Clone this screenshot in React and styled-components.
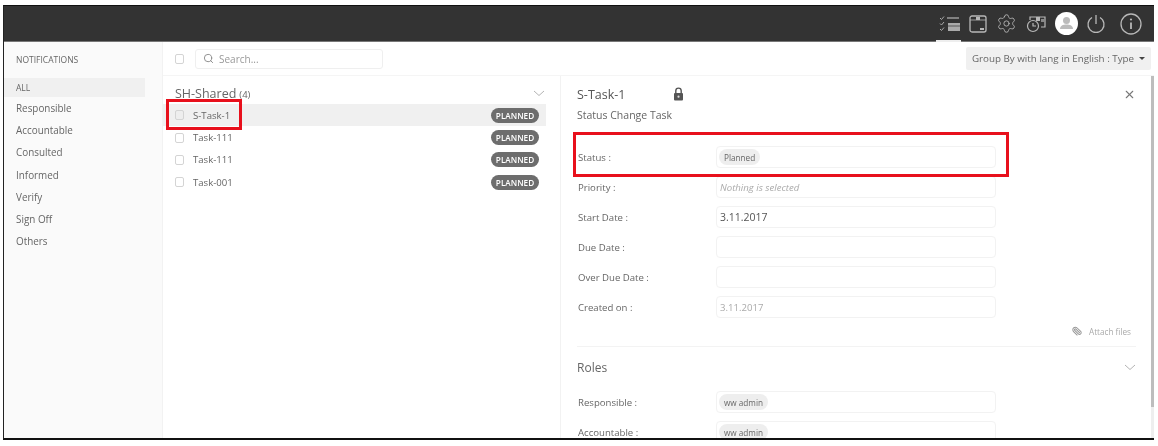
import React from "react";
import styled, { createGlobalStyle } from "styled-components";
import { Search, X, Paperclip, Settings } from "lucide-react";

const GlobalStyle = createGlobalStyle`
  html, body {
    margin: 0;
    padding: 0;
    background: #fff;
    font-family: "Open Sans", "Liberation Sans", sans-serif;
  }
  * { box-sizing: border-box; }
`;

const Frame = styled.div`
  position: relative;
  width: 1151px;
  height: 435px;
  margin: 5px 0 0 3px;
  border-top: 1px solid #111;
  border-left: 1px solid #222;
  border-bottom: 2px solid #111;
  display: flex;
  flex-direction: column;
  overflow: hidden;
  background: #fff;
  filter: blur(0.35px);
`;

const TopBar = styled.div`
  height: 36px;
  flex: none;
  background: #333;
  display: flex;
  justify-content: flex-end;
  padding-right: 3px;
  border-bottom: 1px solid #777;
`;

const NavCell = styled.div`
  position: relative;
  width: ${(p) => p.$w}px;
  display: flex;
  align-items: center;
  justify-content: center;
  color: #b8b8b8;

  ${(p) =>
    p.$active &&
    `&::after {
      content: "";
      position: absolute;
      left: 0;
      bottom: -1px;
      width: 25px;
      height: 2px;
      background: #eee;
    }`}
`;

const Main = styled.div`
  flex: 1;
  min-height: 0;
  display: flex;
`;

const Sidebar = styled.aside`
  width: 159px;
  flex: none;
  background: #fafafa;
  border-right: 1px solid #f2f2f2;
  padding-right: 17px;
`;

const SideTitle = styled.div`
  height: 36px;
  padding: 0 0 2px 12px;
  display: flex;
  align-items: center;
  font-size: 8.5px;
  color: #666;
  text-transform: uppercase;
`;

const SideItem = styled.div`
  height: ${(p) => (p.$active ? 19 : 22.2)}px;
  padding-left: 12px;
  display: flex;
  align-items: center;
  font-size: ${(p) => (p.$active ? 8.5 : 9.9)}px;
  color: #666;
  background: ${(p) => (p.$active ? "#f0f0f0" : "transparent")};
`;

const SideList = styled.div`
  display: flex;
  flex-direction: column;
`;

const Content = styled.div`
  flex: 1;
  min-width: 0;
  display: flex;
  flex-direction: column;
`;

const Toolbar = styled.div`
  height: 34px;
  flex: none;
  display: flex;
  align-items: center;
  padding: 0 3px 0 12px;
  border-bottom: 1px solid #f5f5f5;
`;

const CheckBox = styled.span`
  width: 9px;
  height: 10px;
  flex: none;
  border: 1px solid #d4d4d4;
  border-radius: 2px;
  background: ${(p) => (p.$selected ? "#eee" : "#fff")};
`;

const SearchBox = styled.div`
  width: 188px;
  height: 20px;
  margin-left: 11px;
  border: 1px solid #efefef;
  border-radius: 3px;
  padding-left: 7px;
  display: flex;
  align-items: center;
  gap: 5px;
  font-size: 10px;
  color: #999;
`;

const GroupBy = styled.div`
  margin-left: auto;
  width: 185px;
  height: 23px;
  background: #f0f0f0;
  border-radius: 2px;
  display: flex;
  align-items: center;
  justify-content: center;
  gap: 4px;
  font-size: 9.8px;
  color: #666;
`;

const Caret = styled.span`
  width: 0;
  height: 0;
  border-left: 3px solid transparent;
  border-right: 3px solid transparent;
  border-top: 3px solid #444;
  margin-left: 1px;
`;

const Split = styled.div`
  flex: 1;
  min-height: 0;
  display: flex;
`;

const ListPane = styled.section`
  width: 398px;
  flex: none;
  border-right: 1px solid #f2f2f2;
  padding-right: 14px;
`;

const GroupHead = styled.div`
  height: 28px;
  padding: 6px 1px 0 12px;
  display: flex;
  align-items: center;
  justify-content: space-between;
  color: #666;
  font-size: 12.5px;

  small {
    font-size: 9.5px;
    margin-left: 3px;
  }
`;

const TaskRow = styled.div`
  height: 22.4px;
  display: flex;
  align-items: center;
  padding: 0 7px 0 12px;
  background: ${(p) => (p.$selected ? "#f0f0f0" : "transparent")};
  font-size: 9.6px;
  color: #666;
`;

const TaskName = styled.span`
  margin-left: 9px;
`;

const Badge = styled.span`
  margin-left: auto;
  width: 48px;
  height: 15px;
  border-radius: 8px;
  background: #6d6d6d;
  color: #fff;
  font-size: 8.2px;
  font-weight: 600;
  display: flex;
  align-items: center;
  justify-content: center;
`;

const DetailPane = styled.section`
  flex: 1;
  min-width: 0;
  overflow: hidden;
  padding: 0 15px 0 16px;
  color: #666;
`;

const TitleRow = styled.div`
  height: 29px;
  padding-top: 7px;
  display: flex;
  align-items: center;
  font-size: 12.5px;
  color: #555;
`;

const TitleText = styled.span`
  width: 96px;
`;

const CloseIcon = styled.span`
  margin-left: auto;
  display: flex;
  color: #777;
`;

const SubTitle = styled.div`
  height: 19px;
  margin-bottom: 18px;
  display: flex;
  align-items: center;
  font-size: 10.5px;
  color: #666;
`;

const Field = styled.div`
  height: 30px;
  display: flex;
  align-items: center;
  padding-left: 1px;
  font-size: 9.6px;
`;

const FieldLabel = styled.label`
  width: 138px;
  flex: none;
`;

const FieldBox = styled.div`
  width: 280px;
  height: 22px;
  border: 1px solid #f2f2f2;
  border-radius: 4px;
  padding-left: ${(p) => (p.$pill ? 2 : 3)}px;
  display: flex;
  align-items: center;
  font-size: ${(p) => (p.$strong ? 10.5 : 9.6)}px;
  color: ${(p) => (p.$strong ? "#555" : "#aaa")};
  font-style: ${(p) => (p.$italic ? "italic" : "normal")};
`;

const Pill = styled.span`
  height: 16px;
  padding: 0 5px;
  border-radius: 8px;
  background: #eee;
  color: #666;
  font-size: 8.2px;
  display: flex;
  align-items: center;
`;

const AttachRow = styled.div`
  height: 18px;
  padding-right: 5px;
  display: flex;
  align-items: center;
  justify-content: flex-end;
  gap: 7px;
  font-size: 8.2px;
  color: #aaa;

  svg {
    transform: rotate(90deg);
  }
`;

const Divider = styled.div`
  height: 1px;
  background: #f3f3f3;
  margin-top: 6px;
`;

const SectionHead = styled.div`
  height: 40px;
  display: flex;
  align-items: center;
  justify-content: space-between;
  font-size: 12px;
  color: #666;
`;

const ScrollTrack = styled.div`
  width: 3px;
  flex: none;
  background: #eee;
`;

const ScrollThumb = styled.div`
  height: 331px;
  background: #bdbdbd;
`;

const Annotation = styled.div`
  position: absolute;
  left: ${(p) => p.$x}px;
  top: ${(p) => p.$y}px;
  width: ${(p) => p.$w}px;
  height: ${(p) => p.$h}px;
  border: 3px solid #e8101c;
  pointer-events: none;
`;

function Chevron() {
  return (
    <svg width="12" height="7" viewBox="0 0 12 7" fill="none" stroke="#aaa" strokeWidth="0.9">
      <path d="M1 1l5 4.500L11 1" />
    </svg>
  );
}

function LockIcon() {
  return (
    <svg width="11" height="14" viewBox="0 0 11 14" fill="none">
      <path d="M2.800 6V3.800a2.700 2.700 0 0 1 5.400 0V6" stroke="#555" strokeWidth="1.400" />
      <rect x="1" y="6" width="9" height="7.500" rx="1" fill="#555" />
      <circle cx="5.500" cy="9.700" r="1.100" fill="#ddd" />
    </svg>
  );
}

function TasksIcon() {
  return (
    <svg width="22" height="18" viewBox="0 0 22 18" fill="none" stroke="#aaa" strokeWidth="1">
      <path d="M1 3l1.500 1.500L5 1.500M1 8.500l1.500 1.500L5 7M1 14l1.500 1.500L5 12.500" />
      <path d="M8 3h12" strokeWidth="1.300" />
      <rect x="9" y="8" width="12" height="8" fill="#aaa" stroke="none" />
      <path d="M9 11h12" stroke="#333" strokeWidth="0.700" />
    </svg>
  );
}

function BoxIcon() {
  return (
    <svg width="18" height="18" viewBox="0 0 18 18" fill="none" stroke="currentColor" strokeWidth="1.300">
      <rect x="1" y="1" width="16" height="16" rx="2" />
      <path d="M1 5h16" strokeWidth="0.800" />
      <rect x="7" y="2" width="4" height="3" fill="currentColor" stroke="none" />
      <rect x="11" y="13" width="4" height="2" fill="currentColor" stroke="none" />
    </svg>
  );
}

function ClockIcon() {
  return (
    <svg width="20" height="18" viewBox="0 0 20 18" fill="none" stroke="currentColor" strokeWidth="1.200">
      <path d="M4 5V2h15v10h-4" />
      <rect x="10" y="2" width="4" height="4" fill="currentColor" stroke="none" />
      <rect x="15" y="4" width="4" height="3" fill="#888" stroke="none" />
      <circle cx="7" cy="11" r="5.500" />
      <path d="M7 8v3h3" />
    </svg>
  );
}

function AvatarIcon() {
  return (
    <svg width="23" height="23" viewBox="0 0 23 23">
      <circle cx="11.500" cy="11.500" r="11.500" fill="#fff" />
      <circle cx="11.500" cy="8.500" r="3.500" fill="#bbb" />
      <path d="M5 17c0-3.200 3-4.500 6.500-4.500S18 13.800 18 17z" fill="#bbb" />
    </svg>
  );
}

function PowerIcon() {
  return (
    <svg width="20" height="20" viewBox="0 0 20 20" fill="none" stroke="currentColor" strokeWidth="1.300">
      <path d="M6 3.500a8 8 0 1 0 8 0" />
      <path d="M10 1v9" />
    </svg>
  );
}

function InfoIcon() {
  return (
    <svg width="22" height="22" viewBox="0 0 22 22" fill="none" stroke="currentColor" strokeWidth="1.300">
      <circle cx="11" cy="11" r="10" />
      <path d="M11 9.500V16" strokeWidth="1.800" />
      <circle cx="11" cy="6.500" r="1.100" fill="currentColor" stroke="none" />
    </svg>
  );
}

const sideItems = ["Responsible", "Accountable", "Consulted", "Informed", "Verify", "Sign Off", "Others"];
const tasks = ["S-Task-1", "Task-111", "Task-111", "Task-001"];

export default function App() {
  return (
    <>
      <GlobalStyle />
      <Frame>
        <TopBar>
          <NavCell $w={28} $active><TasksIcon /></NavCell>
          <NavCell $w={27}><BoxIcon /></NavCell>
          <NavCell $w={30}><Settings size={21} strokeWidth={1} /></NavCell>
          <NavCell $w={30}><ClockIcon /></NavCell>
          <NavCell $w={30}><AvatarIcon /></NavCell>
          <NavCell $w={30}><PowerIcon /></NavCell>
          <NavCell $w={40}><InfoIcon /></NavCell>
        </TopBar>
        <Main>
          <Sidebar>
            <SideTitle>Notifications</SideTitle>
            <SideList>
              <SideItem $active>ALL</SideItem>
              {sideItems.map((item) => (
                <SideItem key={item}>{item}</SideItem>
              ))}
            </SideList>
          </Sidebar>
          <Content>
            <Toolbar>
              <CheckBox />
              <SearchBox>
                <Search size={11} color="#888" />
                Search...
              </SearchBox>
              <GroupBy>
                Group By with lang in English : Type <Caret />
              </GroupBy>
            </Toolbar>
            <Split>
              <ListPane>
                <GroupHead>
                  <span>SH-Shared<small>(4)</small></span>
                  <Chevron />
                </GroupHead>
                {tasks.map((task, i) => (
                  <TaskRow key={task + i} $selected={i === 0}>
                    <CheckBox $selected={i === 0} />
                    <TaskName>{task}</TaskName>
                    <Badge>PLANNED</Badge>
                  </TaskRow>
                ))}
              </ListPane>
              <DetailPane>
                <TitleRow>
                  <TitleText>S-Task-1</TitleText>
                  <LockIcon />
                  <CloseIcon><X size={13} /></CloseIcon>
                </TitleRow>
                <SubTitle>Status Change Task</SubTitle>
                <Field>
                  <FieldLabel>Status :</FieldLabel>
                  <FieldBox $pill><Pill>Planned</Pill></FieldBox>
                </Field>
                <Field>
                  <FieldLabel>Priority :</FieldLabel>
                  <FieldBox $italic>Nothing is selected</FieldBox>
                </Field>
                <Field>
                  <FieldLabel>Start Date :</FieldLabel>
                  <FieldBox $strong>3.11.2017</FieldBox>
                </Field>
                <Field>
                  <FieldLabel>Due Date :</FieldLabel>
                  <FieldBox />
                </Field>
                <Field>
                  <FieldLabel>Over Due Date :</FieldLabel>
                  <FieldBox />
                </Field>
                <Field>
                  <FieldLabel>Created on :</FieldLabel>
                  <FieldBox>3.11.2017</FieldBox>
                </Field>
                <AttachRow>
                  <Paperclip size={10} color="#999" strokeWidth={2.5} />
                  Attach files
                </AttachRow>
                <Divider />
                <SectionHead>
                  Roles
                  <Chevron />
                </SectionHead>
                <Field>
                  <FieldLabel>Responsible :</FieldLabel>
                  <FieldBox $pill><Pill>ww admin</Pill></FieldBox>
                </Field>
                <Field>
                  <FieldLabel>Accountable :</FieldLabel>
                  <FieldBox $pill><Pill>ww admin</Pill></FieldBox>
                </Field>
              </DetailPane>
              <ScrollTrack><ScrollThumb /></ScrollTrack>
            </Split>
          </Content>
        </Main>
        <Annotation $x={162} $y={93} $w={76} $h={31} />
        <Annotation $x={569} $y={126} $w={436} $h={45} />
      </Frame>
    </>
  );
}
